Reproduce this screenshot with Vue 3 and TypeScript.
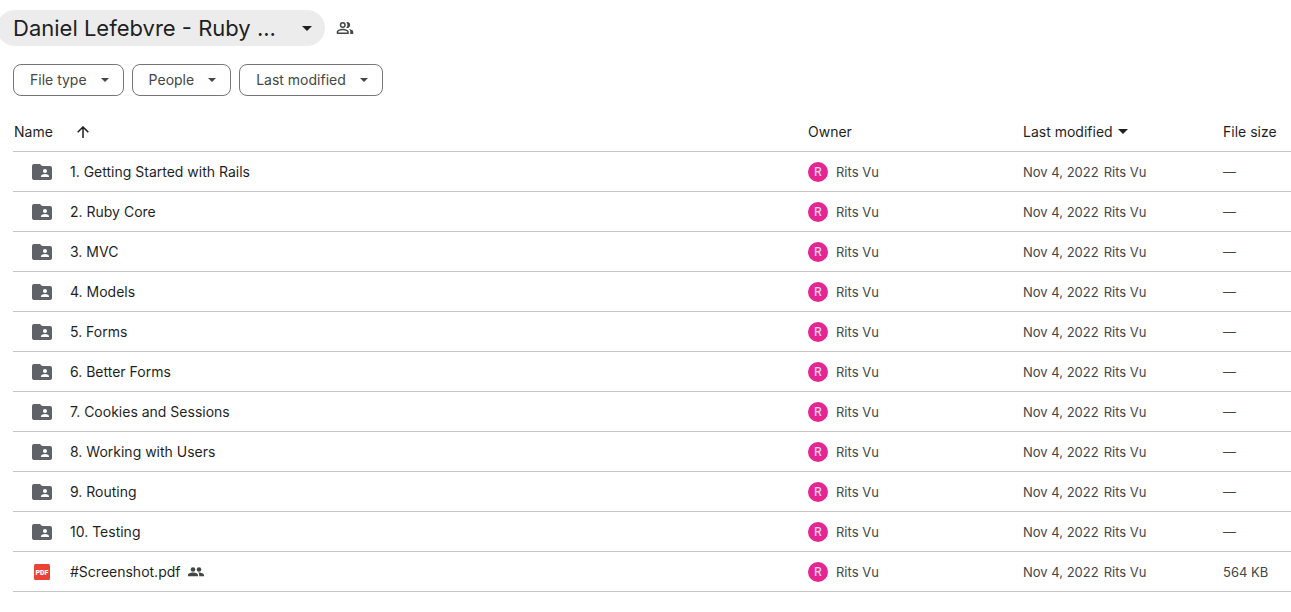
<script setup lang="ts">
interface DriveItem {
  name: string
  kind: 'folder' | 'pdf'
  size: string
  shared?: boolean
}

const owner = 'Rits Vu'
const modified = 'Nov 4, 2022'
const filters: string[] = ['File type', 'People', 'Last modified']

const folders: string[] = [
  '1. Getting Started with Rails',
  '2. Ruby Core',
  '3. MVC',
  '4. Models',
  '5. Forms',
  '6. Better Forms',
  '7. Cookies and Sessions',
  '8. Working with Users',
  '9. Routing',
  '10. Testing',
]

const items: DriveItem[] = [
  ...folders.map((name): DriveItem => ({ name, kind: 'folder', size: '—' })),
  { name: '#Screenshot.pdf', kind: 'pdf', size: '564 KB', shared: true },
]
</script>

<template>
  <main class="drive">
    <header class="heading">
      <button type="button" class="crumb">
        <span class="crumb-text">Daniel Lefebvre - Ruby ...</span>
        <svg class="crumb-caret" viewBox="0 0 10 5" aria-hidden="true"><path d="M0 0h10L5 5z" /></svg>
      </button>
      <button type="button" class="share" aria-label="Manage access">
        <svg viewBox="0 0 24 24" aria-hidden="true">
          <path fill-rule="evenodd" d="M9 4a4 4 0 1 0 0 8 4 4 0 0 0 0-8zm0 2a2 2 0 1 1 0 4 2 2 0 0 1 0-4zM9 13c-2.700 0-8 1.340-8 4v3h16v-3c0-2.660-5.300-4-8-4zm6 5H3v-.990C3.200 16.290 6.300 15 9 15s5.800 1.290 6 2z" />
          <path d="M13.700 4.200A5.900 5.900 0 0 1 13.700 11.800 4 4 0 1 0 13.700 4.200zM17.500 13.300c1 .9 1.500 2.100 1.500 3.700v3H23v-3c0-2-2.700-3.200-5.500-3.700z" />
        </svg>
      </button>
    </header>

    <div class="filters">
      <button v-for="filter in filters" :key="filter" type="button" class="chip">
        {{ filter }}
        <svg class="chip-caret" viewBox="0 0 8 4" aria-hidden="true"><path d="M0 0h8L4 4z" /></svg>
      </button>
    </div>

    <table class="files">
      <thead>
        <tr>
          <th scope="col" class="col-name">
            <button type="button" class="sort">
              Name
              <svg class="arrow" viewBox="0 0 12 12" aria-hidden="true"><path d="M6 12V1M.7 6.300 6 1l5.300 5.300" /></svg>
            </button>
          </th>
          <th scope="col" class="col-owner">Owner</th>
          <th scope="col" class="col-modified">
            <button type="button" class="sort sort-modified">
              Last modified
              <svg class="sort-caret" viewBox="0 0 10 5" aria-hidden="true"><path d="M0 0h10L5 5z" /></svg>
            </button>
          </th>
          <th scope="col" class="col-size">File size</th>
        </tr>
      </thead>
      <tbody>
        <tr v-for="item in items" :key="item.name">
          <td>
            <div class="name">
              <svg v-if="item.kind === 'folder'" class="kind" viewBox="0 0 24 24" aria-hidden="true">
                <path fill="#5f6368" fill-rule="evenodd" d="M20 6h-8l-2-2H4c-1.100 0-2 .9-2 2v12c0 1.100.9 2 2 2h16c1.100 0 2-.9 2-2V8c0-1.100-.9-2-2-2zm-5 3c1.100 0 2 .9 2 2s-.9 2-2 2-2-.9-2-2 .9-2 2-2zm4 8h-8v-1c0-1.330 2.670-2 4-2s4 .67 4 2z" />
              </svg>
              <svg v-else class="kind" viewBox="0 0 24 24" aria-hidden="true">
                <rect x="4" y="4" width="16" height="16" rx="1.500" fill="#ea4335" />
                <text x="12" y="14.500" text-anchor="middle" class="pdf-text">PDF</text>
              </svg>
              <span class="label">{{ item.name }}</span>
              <svg v-if="item.shared" class="people" viewBox="0 0 16 10" role="img" aria-label="Shared">
                <circle cx="5" cy="2.500" r="2.300" />
                <circle cx="11" cy="2.500" r="2.300" />
                <path d="M0 9.300V8c0-1.600 2.800-2.500 5-2.500S10 6.400 10 8v1.300zM11.200 9.300V8c0-1-.4-1.800-1.100-2.400C12.600 5.300 16 6.200 16 8v1.300z" />
              </svg>
            </div>
          </td>
          <td>
            <div class="owner"><span class="avatar">R</span>{{ owner }}</div>
          </td>
          <td><span class="date">{{ modified }}</span>{{ owner }}</td>
          <td>{{ item.size }}</td>
        </tr>
      </tbody>
    </table>
  </main>
</template>

<style>
body {
  background: #fff;
}
</style>

<style scoped>
.drive {
  padding: 10px 0 20px 13px;
  overflow: hidden;
  color: #444746;
  font: 400 14px/20px Inter, 'Liberation Sans', sans-serif;
}

button {
  margin: 0;
  padding: 0;
  border: 0;
  background: none;
  color: inherit;
  font: inherit;
  cursor: pointer;
}

svg {
  flex: none;
  fill: currentColor;
}

.heading {
  display: flex;
  align-items: center;
  gap: 11px;
}

.crumb {
  display: flex;
  align-items: center;
  gap: 26px;
  height: 36px;
  margin-left: -16px;
  padding: 0 13px 0 16px;
  border-radius: 18px;
  background: #ececec;
  color: #1f1f1f;
  font-size: 22px;
  line-height: 32px;
  white-space: nowrap;
}

.crumb-caret,
.sort-caret {
  width: 10px;
  height: 5px;
}

.share,
.share svg {
  display: block;
  width: 18px;
  height: 18px;
}

.filters {
  display: flex;
  gap: 8px;
  margin-top: 18px;
}

.chip {
  display: flex;
  align-items: center;
  gap: 14px;
  height: 32px;
  padding: 0 14px 0 16px;
  border: 1px solid #747775;
  border-radius: 8px;
}

.chip-caret {
  width: 8px;
  height: 4px;
}

.files {
  width: 100%;
  margin-top: 16px;
  border-collapse: collapse;
  table-layout: fixed;
}

th,
td {
  height: 39px;
  padding: 0;
  border-bottom: 1px solid #c7c7c7;
  text-align: left;
  white-space: nowrap;
}

th {
  color: #1f1f1f;
  font-weight: 400;
}

td {
  font-size: 13px;
}

.col-name {
  padding-left: 1px;
}

.col-owner {
  width: 215px;
}

.col-modified {
  width: 200px;
}

.col-size {
  width: 68px;
}

.sort {
  display: flex;
  align-items: center;
  gap: 24px;
}

.sort-modified {
  gap: 5px;
}

.arrow {
  width: 12px;
  height: 12px;
  fill: none;
  stroke: currentColor;
  stroke-width: 1.5px;
}

.name {
  display: flex;
  align-items: center;
  padding-left: 17px;
  color: #1f1f1f;
  font-size: 14px;
}

.kind {
  width: 24px;
  height: 24px;
  margin-right: 16px;
}

.pdf-text {
  fill: #fff;
  font: 900 7px Roboto, 'Liberation Sans', sans-serif;
}

.people {
  width: 16px;
  height: 10px;
  margin-left: 8px;
  color: #444746;
}

.owner {
  display: flex;
  align-items: center;
  gap: 8px;
}

.avatar {
  width: 20px;
  height: 20px;
  border-radius: 50%;
  background: #e52592;
  color: #fbd3e8;
  font-size: 12px;
  font-weight: 500;
  text-align: center;
}

.date {
  margin-right: 5px;
}
</style>
